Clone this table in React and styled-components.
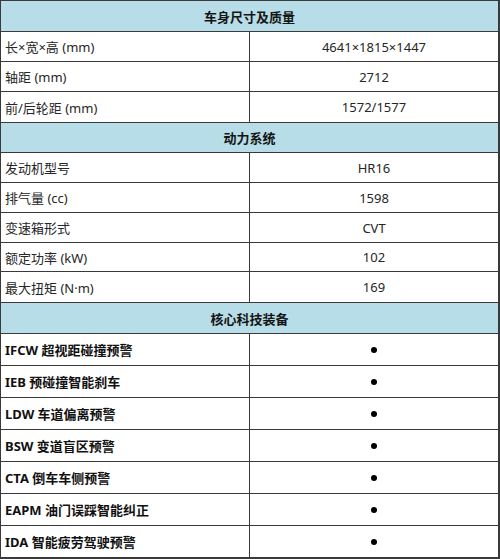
import React from "react";
import styled, { createGlobalStyle } from "styled-components";

const Global = createGlobalStyle`
  html, body { margin: 0; padding: 0; background: #fff; }
  body { font-family: "Noto Sans", "Noto Sans CJK SC", sans-serif; }
`;

const Table = styled.div`
  width: 500px;
  height: 559px;
  box-sizing: border-box;
  border-top: 1px solid #3a3a3a;
  border-left: 1px solid #3a3a3a;
  border-right: 2px solid #3a3a3a;
  border-bottom: 2px solid #3a3a3a;
  display: flex;
  flex-direction: column;
  color: #1e1e1e;
  font-size: 13px;
  font-family: "Noto Sans", "Noto Sans CJK SC", sans-serif;
`;

const SectionHeader = styled.div`
  height: ${(p) => p.$h}px;
  box-sizing: border-box;
  flex: none;
  background: #b7dde8;
  border-bottom: 1px solid #3a3a3a;
  display: flex;
  align-items: center;
  justify-content: center;
  font-weight: 700;
  color: #151515;
`;

const Row = styled.div`
  height: ${(p) => p.$h}px;
  box-sizing: border-box;
  flex: none;
  display: grid;
  grid-template-columns: 249px 1fr;
  border-bottom: 1px solid #3a3a3a;
  &:last-child { border-bottom: none; }
`;

const Label = styled.div`
  border-right: 1px solid #3a3a3a;
  display: flex;
  align-items: center;
  padding-left: 4px;
  font-weight: ${(p) => (p.$bold ? 700 : 400)};
  color: ${(p) => (p.$bold ? "#111" : "#262626")};
  white-space: nowrap;
`;

const Value = styled.div`
  display: flex;
  align-items: center;
  justify-content: center;
  color: #262626;
`;

const Dot = styled.span`
  width: 6px;
  height: 6px;
  border-radius: 50%;
  background: #000;
  display: block;
`;

const sections = [
  {
    title: "车身尺寸及质量",
    h: 31,
    rows: [
      ["长×宽×高 (mm)", "4641×1815×1447", 30],
      ["轴距 (mm)", "2712", 30],
      ["前/后轮距 (mm)", "1572/1577", 31],
    ],
  },
  {
    title: "动力系统",
    h: 30,
    rows: [
      ["发动机型号", "HR16", 30],
      ["排气量 (cc)", "1598", 30],
      ["变速箱形式", "CVT", 30],
      ["额定功率 (kW)", "102", 29],
      ["最大扭矩 (N·m)", "169", 31],
    ],
  },
  {
    title: "核心科技装备",
    h: 31,
    bold: true,
    rows: [
      ["IFCW 超视距碰撞预警", null, 32],
      ["IEB 预碰撞智能刹车", null, 32],
      ["LDW 车道偏离预警", null, 32],
      ["BSW 变道盲区预警", null, 32],
      ["CTA 倒车车侧预警", null, 32],
      ["EAPM 油门误踩智能纠正", null, 32],
      ["IDA 智能疲劳驾驶预警", null, 31],
    ],
  },
];

export default function App() {
  return (
    <>
      <Global />
      <Table>
        {sections.map((s) => (
          <React.Fragment key={s.title}>
            <SectionHeader $h={s.h}>{s.title}</SectionHeader>
            {s.rows.map(([label, value, h]) => (
              <Row key={label} $h={h}>
                <Label $bold={s.bold}>{label}</Label>
                <Value>{value === null ? <Dot /> : value}</Value>
              </Row>
            ))}
          </React.Fragment>
        ))}
      </Table>
    </>
  );
}
